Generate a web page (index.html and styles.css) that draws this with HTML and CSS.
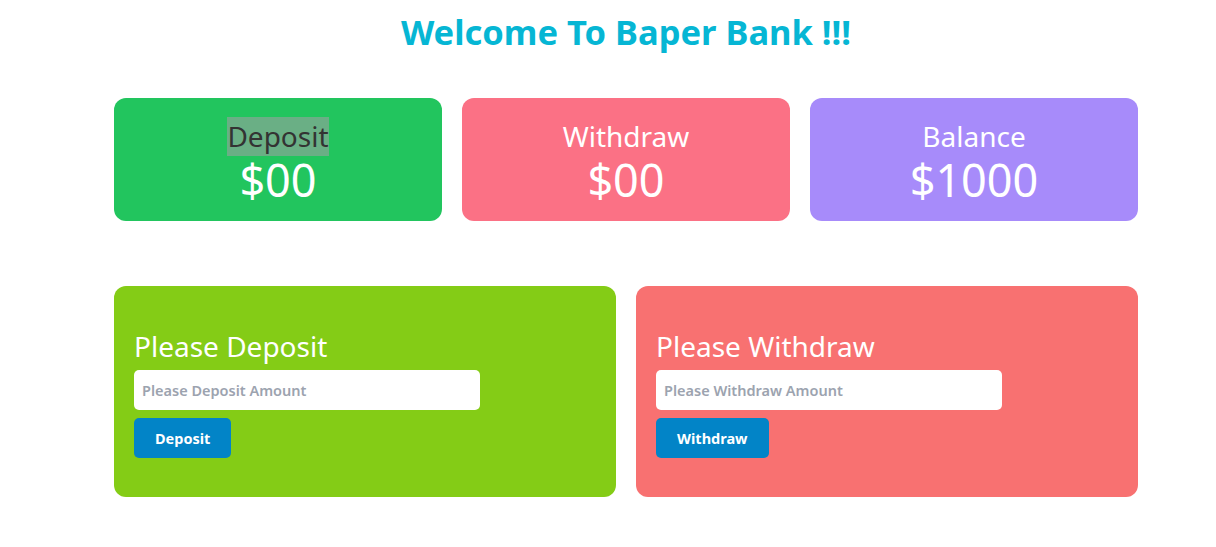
FILE: index.html
```html
<!DOCTYPE html>
<html>
<head>
<meta charset="utf-8">
<link rel="stylesheet" href="styles.css">
</head>
<body>
<div class="page">
  <h1 class="title">Welcome To Baper Bank !!!</h1>
  <div class="stats">
    <div class="stat stat-deposit">
      <div class="stat-label"><span class="hl">Deposit</span></div>
      <div class="stat-value">$00</div>
    </div>
    <div class="stat stat-withdraw">
      <div class="stat-label">Withdraw</div>
      <div class="stat-value">$00</div>
    </div>
    <div class="stat stat-balance">
      <div class="stat-label">Balance</div>
      <div class="stat-value">$1000</div>
    </div>
  </div>
  <div class="forms">
    <div class="form form-deposit">
      <h2 class="form-title">Please Deposit</h2>
      <input class="field" type="text" placeholder="Please Deposit Amount">
      <button class="btn">Deposit</button>
    </div>
    <div class="form form-withdraw">
      <h2 class="form-title">Please Withdraw</h2>
      <input class="field" type="text" placeholder="Please Withdraw Amount">
      <button class="btn">Withdraw</button>
    </div>
  </div>
</div>
</body>
</html>
```

FILE: styles.css
```css
* { box-sizing: border-box; }
body {
  margin: 0;
  background: #fff;
  font-family: "Noto Sans", "Open Sans", sans-serif;
}
.page {
  width: 1024px;
  margin-left: 114px;
  padding-top: 12px;
}
.title {
  margin: 0;
  text-align: center;
  color: #06b6d4;
  font-size: 34.5px;
  line-height: 40px;
  font-weight: 700;
}
.stats {
  margin-top: 46px;
  display: grid;
  grid-template-columns: repeat(3, 1fr);
  gap: 20px;
}
.stat {
  height: 123px;
  border-radius: 12px;
  display: flex;
  flex-direction: column;
  align-items: center;
  padding-top: 18px;
  color: #fff;
}
.stat-deposit { background: #22c55e; }
.stat-withdraw { background: #fb7185; }
.stat-balance { background: #a78bfa; }
.stat-label {
  font-size: 28px;
  line-height: 39px;
  padding-top: 1px;
}
.hl {
  background: #6aaf85;
  color: #333;
  display: inline-block;
}
.stat-value {
  font-size: 45px;
  line-height: 48px;
}
.forms {
  margin-top: 65px;
  display: grid;
  grid-template-columns: 1fr 1fr;
  gap: 20px;
}
.form {
  height: 211px;
  border-radius: 12px;
  padding: 40px 20px 0;
  display: flex;
  flex-direction: column;
  align-items: flex-start;
}
.form-deposit { background: #84cc16; }
.form-withdraw { background: #f87171; }
.form-title {
  margin: 0 0 4px;
  color: #fff;
  font-weight: 400;
  font-size: 28px;
  line-height: 40px;
}
.field {
  width: 346px;
  height: 40px;
  border: none;
  border-radius: 5px;
  padding: 0 8px;
  font-family: inherit;
  font-size: 14.5px;
  font-weight: 600;
  outline: none;
}
.field::placeholder { color: #9ca3af; }
.btn {
  margin-top: 8px;
  height: 40px;
  padding: 0 21px;
  border: none;
  border-radius: 5px;
  background: #0284c7;
  color: #fff;
  font-family: inherit;
  font-size: 14.5px;
  font-weight: 700;
}
```
